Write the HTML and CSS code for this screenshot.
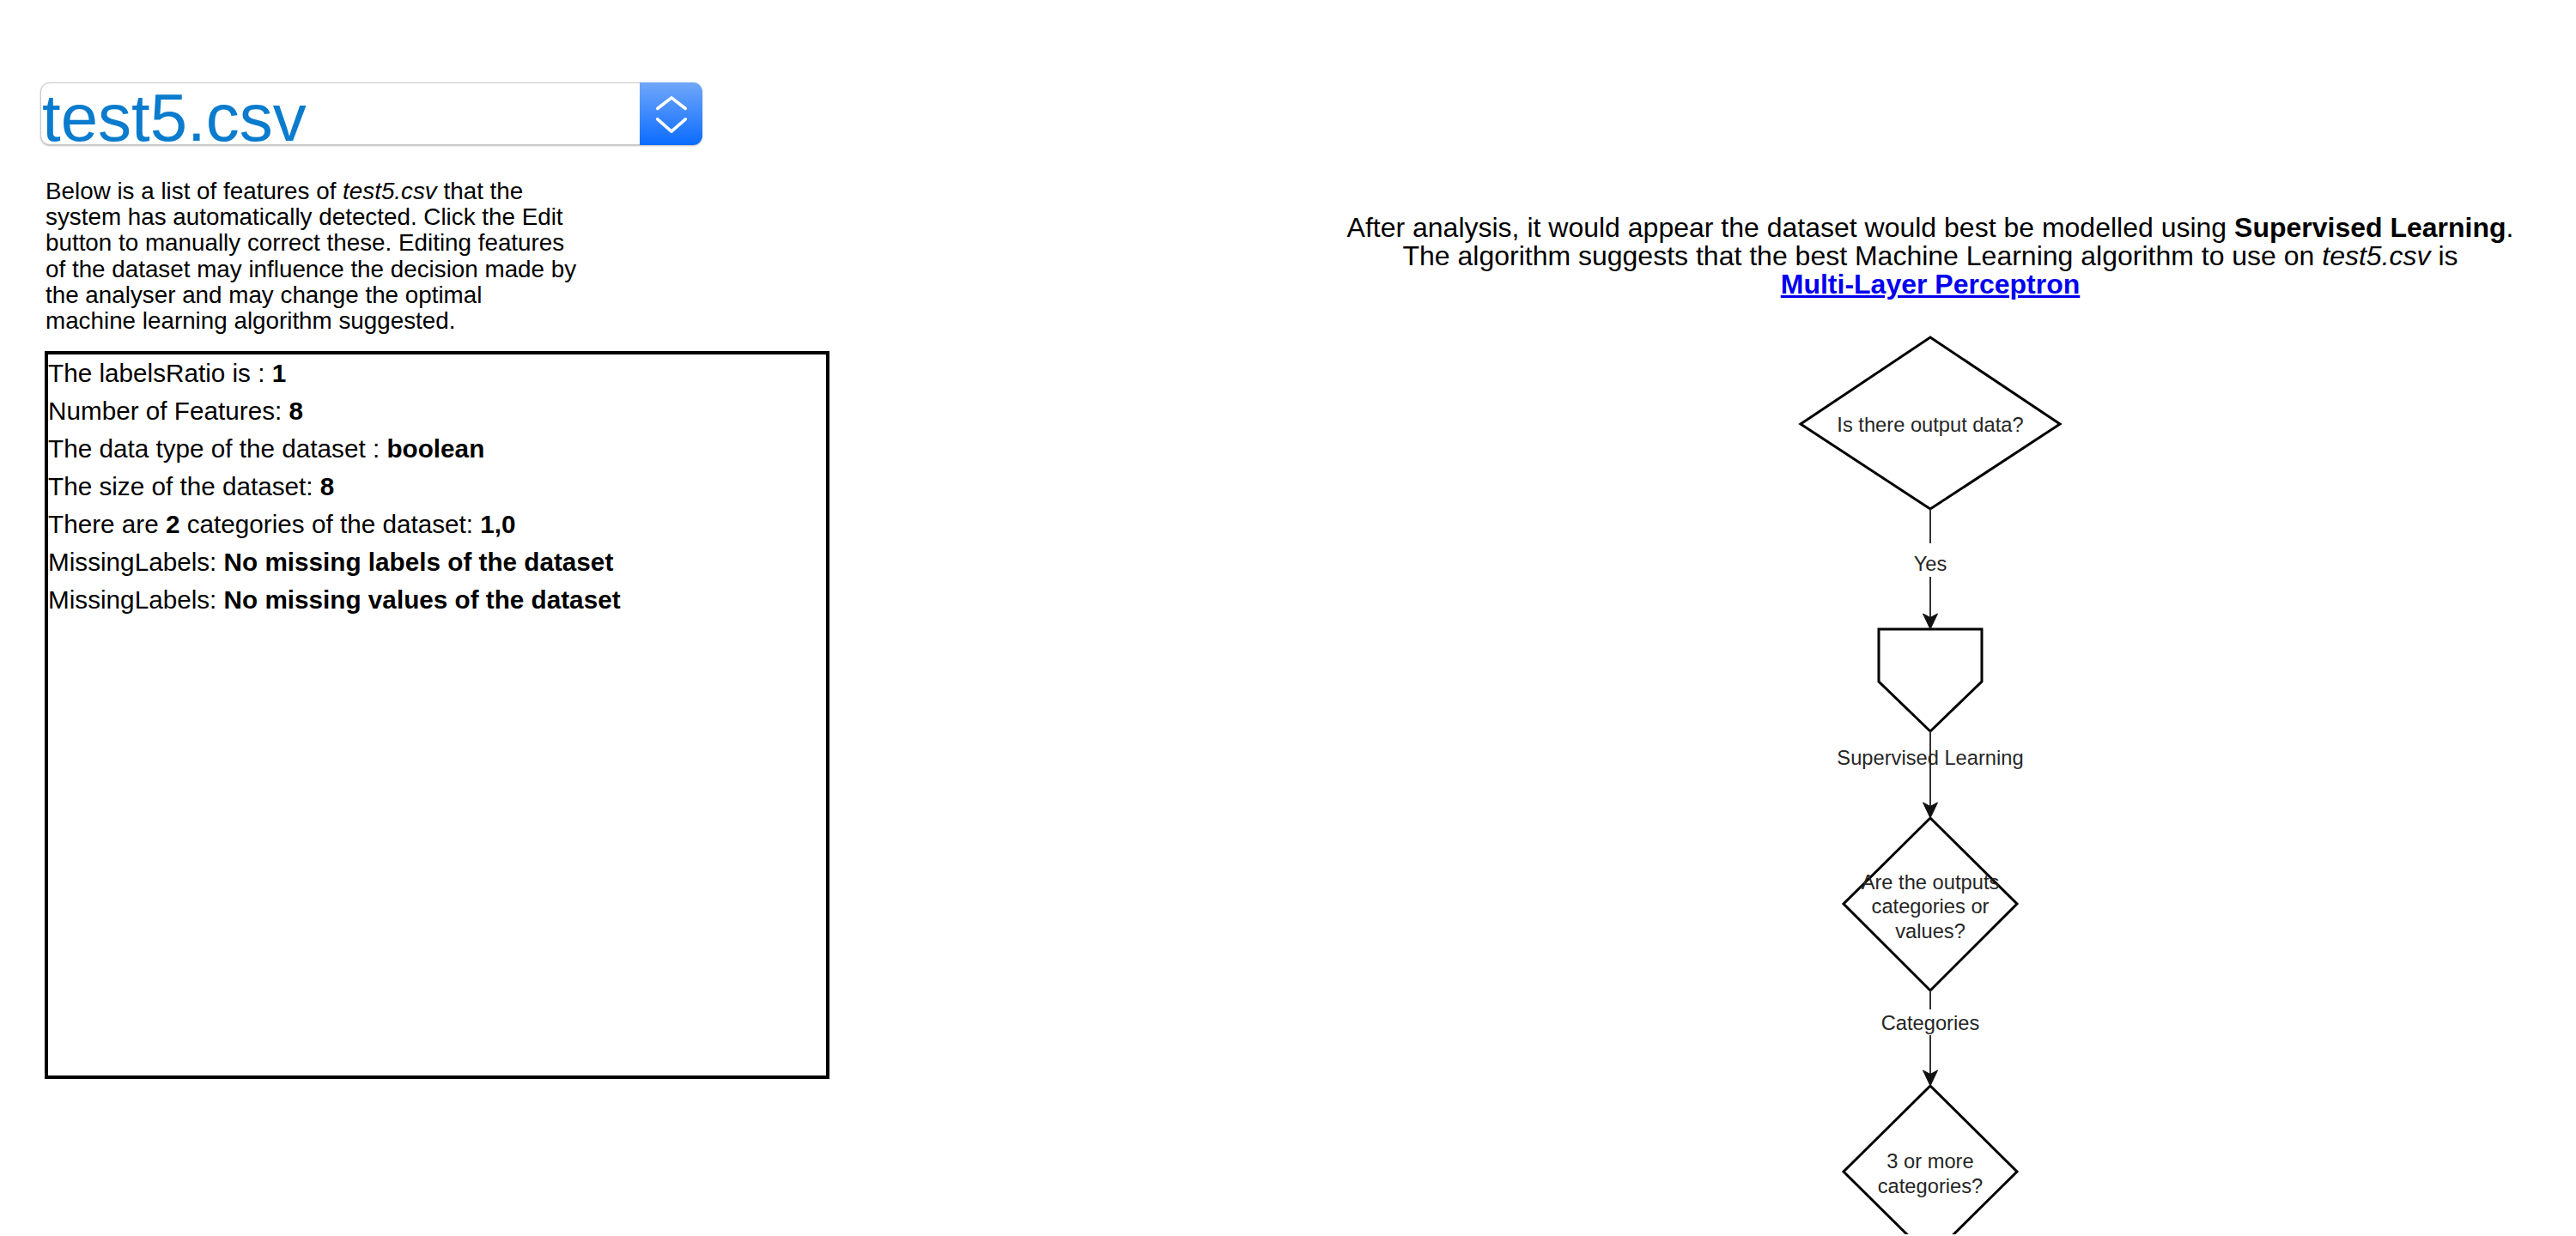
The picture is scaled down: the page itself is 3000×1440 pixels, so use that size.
FILE: index.html
```html
<!DOCTYPE html>
<html lang="en">
<head>
<meta charset="utf-8">
<title>Dataset analysis</title>
<link rel="stylesheet" href="styles.css">
</head>
<body>
<div class="page">
  <section class="left">
    <div class="select">
      <span class="select-value">test5.csv</span>
      <span class="select-btn">
        <svg class="chevrons" width="40" height="48" viewBox="0 0 40 48">
          <path d="M3.7 17.5 L20 4.8 L36.3 17.5" />
          <path d="M3.7 29.8 L20 44.2 L36.3 29.8" />
        </svg>
      </span>
    </div>
    <p class="intro">Below is a list of features of <em>test5.csv</em> that the<br>system has automatically detected. Click the Edit<br>button to manually correct these. Editing features<br>of the dataset may influence the decision made by<br>the analyser and may change the optimal<br>machine learning algorithm suggested.</p>
    <div class="features">
      <div class="row">The labelsRatio is : <b>1</b></div>
      <div class="row">Number of Features: <b>8</b></div>
      <div class="row">The data type of the dataset : <b>boolean</b></div>
      <div class="row">The size of the dataset: <b>8</b></div>
      <div class="row">There are <b>2</b> categories of the dataset: <b>1,0</b></div>
      <div class="row">MissingLabels: <b>No missing labels of the dataset</b></div>
      <div class="row">MissingLabels: <b>No missing values of the dataset</b></div>
    </div>
  </section>
  <section class="right">
    <p class="summary">After analysis, it would appear the dataset would best be modelled using <b>Supervised Learning</b>.<br>The algorithm suggests that the best Machine Learning algorithm to use on <em>test5.csv</em> is<br><a href="#">Multi-Layer Perceptron</a></p>
    <svg class="flow" width="400" height="1068" viewBox="0 0 400 1068">
      <g class="shape">
        <path d="M200 23 L351 124 L200 223 L49 124 Z" />
        <path d="M140 363 H260 V424 L200 482 L140 424 Z" />
        <path d="M200 583 L301 683 L200 784 L99 683 Z" />
        <path d="M200 895 L301 995 L200 1095 L99 995 Z" />
      </g>
      <g class="edge">
        <path d="M200 223 V263" />
        <path d="M200 302 V350" />
        <path d="M200 482 V570" />
        <path d="M200 784 V806" />
        <path d="M200 836 V882" />
      </g>
      <g class="arrow">
        <path d="M200 363 L191.5 345 L200 349.5 L208.5 345 Z" />
        <path d="M200 583 L191.5 565 L200 569.5 L208.5 565 Z" />
        <path d="M200 895 L191.5 877 L200 881.5 L208.5 877 Z" />
      </g>
      <g class="label">
        <text x="200" y="132.5">Is there output data?</text>
        <text x="200" y="295">Yes</text>
        <text x="200" y="521">Supervised Learning</text>
        <text x="200" y="665.5">Are the outputs</text>
        <text x="200" y="694">categories or</text>
        <text x="200" y="722.5">values?</text>
        <text x="200" y="830">Categories</text>
        <text x="200" y="991">3 or more</text>
        <text x="200" y="1020">categories?</text>
      </g>
    </svg>
  </section>
</div>
</body>
</html>
```

FILE: styles.css
```css
html, body {
  margin: 0;
  padding: 0;
  background: #fff;
}

body {
  font-family: "Liberation Sans", Arial, Helvetica, sans-serif;
  color: #000;
}

.page {
  display: flex;
  align-items: flex-start;
}

.left {
  width: 1500px;
  box-sizing: border-box;
  padding: 96px 0 0 47px;
}

.select {
  display: flex;
  width: 771px;
  height: 73px;
  box-sizing: border-box;
  border: 1px solid #c9c9c9;
  border-radius: 11px;
  box-shadow: 0 1px 2px rgba(0, 0, 0, 0.28);
  background: #fff;
}

.select-value {
  flex: 1;
  font-size: 78px;
  line-height: 71px;
  padding-left: 1px;
  color: #0a7bcd;
  white-space: nowrap;
  transform: translateY(5px);
}

.select-btn {
  width: 73px;
  margin: -1px -1px -1px 0;
  display: flex;
  align-items: center;
  justify-content: center;
  border-radius: 0 11px 11px 0;
  background: linear-gradient(#70a7f9, #0b6cff);
}

.chevrons path {
  fill: none;
  stroke: #fff;
  stroke-width: 3.6;
  stroke-linecap: round;
  stroke-linejoin: round;
}

.intro {
  margin: 39px 0 0 6px;
  font-size: 27.8px;
  line-height: 30.2px;
  white-space: nowrap;
}

.features {
  margin: 20px 0 0 5px;
  width: 914px;
  height: 848px;
  box-sizing: border-box;
  border: 4px solid #000;
}

.row {
  font-size: 29.7px;
  line-height: 44px;
  white-space: nowrap;
}

.right {
  width: 1496px;
  text-align: center;
  padding-top: 249px;
}

.summary {
  margin: 0;
  font-size: 32px;
  line-height: 33px;
  white-space: nowrap;
}

.summary a {
  color: #0000ee;
  font-weight: bold;
  text-decoration: underline;
}

.flow {
  display: block;
  margin: 22px auto 0;
  overflow: hidden;
}

.shape path {
  fill: #fff;
  stroke: #000;
  stroke-width: 3;
  stroke-linejoin: miter;
}

.edge path {
  fill: none;
  stroke: #333;
  stroke-width: 2;
}

.arrow path {
  fill: #111;
  stroke: #111;
  stroke-width: 1;
}

.label text {
  font-family: "Liberation Sans", Arial, Helvetica, sans-serif;
  font-size: 23.7px;
  fill: #262626;
  text-anchor: middle;
}
```
